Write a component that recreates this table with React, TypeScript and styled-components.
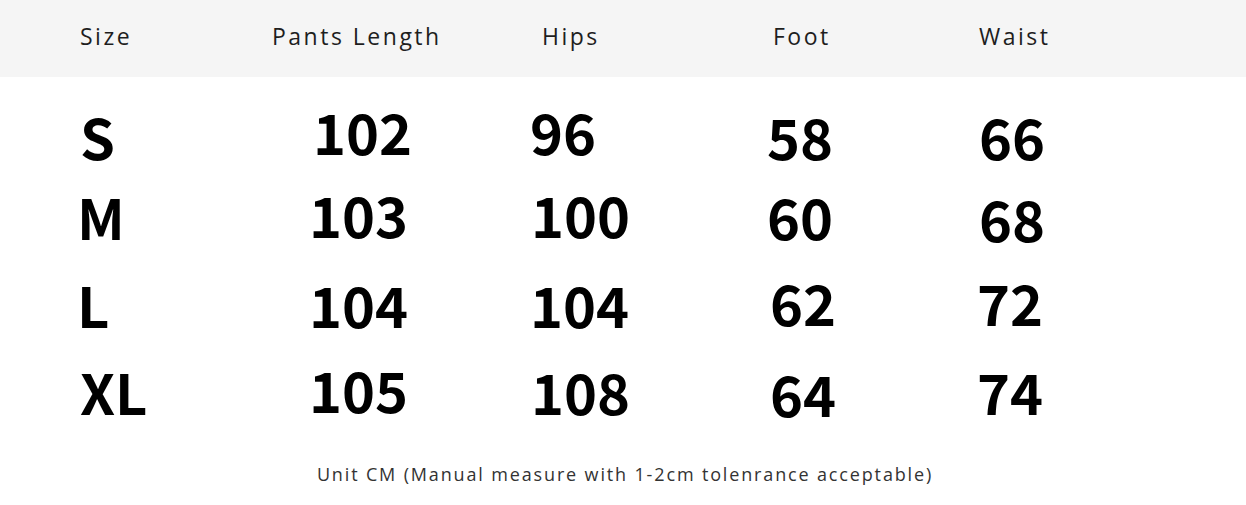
import React from "react";
import styled, { createGlobalStyle } from "styled-components";

const Global = createGlobalStyle`
  html, body { margin: 0; padding: 0; background: #ffffff; }
  body { width: 1246px; height: 505px; overflow: hidden; }
`;

const Page = styled.div`
  width: 1246px;
  height: 505px;
  display: flex;
  flex-direction: column;
  background: #ffffff;
`;

const HeaderBar = styled.div`
  height: 77px;
  background: #f5f5f5;
  display: grid;
  grid-template-columns: 192px 270px 231px 206px 1fr;
  padding-left: 80px;
  align-items: start;
  padding-top: 20px;
  box-sizing: border-box;
`;

const HeaderLabel = styled.div`
  font-family: "Open Sans", "Noto Sans", sans-serif;
  font-size: 23px;
  line-height: 32px;
  letter-spacing: 2.5px;
  color: #1e1e1e;
`;

const Body = styled.div`
  display: flex;
  flex-direction: column;
  padding-left: 77px;
`;

const Row = styled.div<{ $top: number }>`
  display: grid;
  grid-template-columns: 233px 219px 238px 210px 1fr;
  height: 56px;
  margin-top: ${(p) => p.$top}px;
`;

const Cell = styled.div<{ $dx?: number; $dy?: number }>`
  font-family: "Noto Sans CJK SC", "Noto Sans", sans-serif;
  font-weight: 700;
  font-size: 56px;
  line-height: 56px;
  height: 56px;
  color: #000000;
  margin-left: ${(p) => p.$dx ?? 0}px;
  margin-top: ${(p) => p.$dy ?? 0}px;
  white-space: nowrap;
`;

const Footer = styled.div`
  margin-top: auto;
  margin-bottom: 18px;
  padding-left: 4px;
  text-align: center;
  font-family: "Open Sans", "Noto Sans", sans-serif;
  font-size: 18px;
  line-height: 26px;
  letter-spacing: 1.85px;
  color: #333333;
`;

type C = [string, number, number];

const rows: { top: number; cells: C[] }[] = [
  {
    top: 26,
    cells: [
      ["S", 3, 5],
      ["102", 3, 0],
      ["96", 1, 0],
      ["58", 0, 5],
      ["66", 2, 5],
    ],
  },
  {
    top: 27,
    cells: [
      ["M", 0, 2],
      ["103", -1, 0],
      ["100", 2, 0],
      ["60", 0, 2],
      ["68", 2, 4],
    ],
  },
  {
    top: 34,
    cells: [
      ["L", 0, 0],
      ["104", -1, 0],
      ["104", 1, 0],
      ["62", 3, -2],
      ["72", 0, -2],
    ],
  },
  {
    top: 29,
    cells: [
      ["XL", 3, 2],
      ["105", -1, 0],
      ["108", 2, 2],
      ["64", 3, 4],
      ["74", 0, 2],
    ],
  },
];

const headers = ["Size", "Pants Length", "Hips", "Foot", "Waist"];

export default function App() {
  return (
    <Page>
      <Global />
      <HeaderBar>
        {headers.map((h) => (
          <HeaderLabel key={h}>{h}</HeaderLabel>
        ))}
      </HeaderBar>
      <Body>
        {rows.map((r, i) => (
          <Row key={i} $top={r.top}>
            {r.cells.map(([t, dx, dy], j) => (
              <Cell key={j} $dx={dx} $dy={dy}>
                {t}
              </Cell>
            ))}
          </Row>
        ))}
      </Body>
      <Footer>Unit CM (Manual measure with 1-2cm tolenrance acceptable)</Footer>
    </Page>
  );
}
